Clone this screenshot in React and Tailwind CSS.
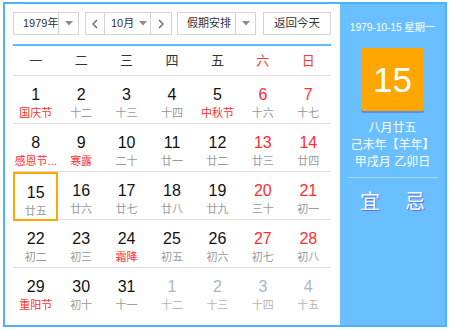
import React from 'react';

const FONT = { fontFamily: '"Liberation Sans", Arial, "Noto Sans CJK SC", sans-serif' };

const weekdays = [
  { label: '一' },
  { label: '二' },
  { label: '三' },
  { label: '四' },
  { label: '五' },
  { label: '六', red: true },
  { label: '日', red: true },
];

// [day, lunar, festival?, otherMonth?]
const weeks = [
  [[1, '国庆节', true], [2, '十二'], [3, '十三'], [4, '十四'], [5, '中秋节', true], [6, '十六'], [7, '十七']],
  [[8, '感恩节...', true], [9, '寒露', true], [10, '二十'], [11, '廿一'], [12, '廿二'], [13, '廿三'], [14, '廿四']],
  [[15, '廿五'], [16, '廿六'], [17, '廿七'], [18, '廿八'], [19, '廿九'], [20, '三十'], [21, '初一']],
  [[22, '初二'], [23, '初三'], [24, '霜降', true], [25, '初五'], [26, '初六'], [27, '初七'], [28, '初八']],
  [[29, '重阳节', true], [30, '初十'], [31, '十一'], [1, '十二', false, true], [2, '十三', false, true], [3, '十四', false, true], [4, '十五', false, true]],
];

const Caret = () => (
  <svg width="8" height="5" viewBox="0 0 8 5">
    <path d="M0 0h8L4 4.5z" fill="#8a8a8a" />
  </svg>
);

const Chevron = ({ dir }) => (
  <svg width="6" height="10" viewBox="0 0 6 10">
    <path d={dir === 'left' ? 'M5 1L1 5l4 4' : 'M1 1l4 4-4 4'} fill="none" stroke="#555" strokeWidth="1.1" />
  </svg>
);

const DayCell = ({ cell, col }) => {
  const [day, lunar, festival, other] = cell;
  const weekend = col >= 5;
  const selected = day === 15 && !other;
  let numColor = 'text-[#111]';
  if (other) numColor = 'text-[#a9b7c6]';
  else if (weekend) numColor = 'text-[#ff2d2d]';
  let lunarColor = 'text-[#999]';
  if (festival) lunarColor = 'text-[#ff2d2d]';
  else if (other) lunarColor = 'text-[#b5b5b5]';

  return (
    <div
      className={`flex h-full flex-col items-center pt-[9px] ${
        selected ? 'border-[2px] border-[#ffa800] pt-[7px]' : ''
      }`}
    >
      <span className={`text-[16px] leading-[19px] ${numColor}`}>{day}</span>
      <span className={`mt-[1px] text-[11px] leading-[16px] whitespace-nowrap ${lunarColor}`}>{lunar}</span>
    </div>
  );
};

const App = () => {
  return (
    <div className="bg-white w-[450px] h-[330px] pt-[2px] pl-[3px]" style={FONT}>
      <div className="flex w-[444px] h-[325px] border-2 border-[#4cb3fa]">
        <div className="w-[335px] pl-[8px] pr-[9px] pt-[8px]">
          <div className="flex items-center h-[23px] text-[11px] text-[#333] whitespace-nowrap">
            <div className="flex h-[23px] w-[66px] border border-[#d3d3d3]">
              <span className="flex-1 flex items-center pl-[9px]">1979年</span>
              <span className="w-[20px] flex items-center justify-center border-l border-[#d3d3d3]">
                <Caret />
              </span>
            </div>
            <div className="flex h-[23px] w-[87px] ml-[6px] border border-[#d3d3d3]">
              <span className="w-[19px] flex items-center justify-center border-r border-[#d3d3d3]">
                <Chevron dir="left" />
              </span>
              <span className="flex-1 flex items-center justify-between pl-[6px] pr-[3px]">
                <span>10月</span>
                <Caret />
              </span>
              <span className="w-[21px] flex items-center justify-center border-l border-[#d3d3d3]">
                <Chevron dir="right" />
              </span>
            </div>
            <div className="flex h-[23px] w-[79px] ml-[5px] border border-[#d3d3d3]">
              <span className="flex-1 flex items-center pl-[9px]">假期安排</span>
              <span className="w-[20px] flex items-center justify-center border-l border-[#d3d3d3]">
                <Caret />
              </span>
            </div>
            <div className="flex h-[23px] w-[68px] ml-[7px] items-center justify-center border border-[#d3d3d3] text-[11.5px]">
              返回今天
            </div>
          </div>

          <div className="mt-[9px] border-t-2 border-[#5fbcff]" />
          <div className="grid grid-cols-7 h-[30px] border-b border-[#dcdcdc] items-center text-[13px]">
            {weekdays.map((w) => (
              <span key={w.label} className={`text-center ${w.red ? 'text-[#ff3b3b]' : 'text-[#333]'}`}>
                {w.label}
              </span>
            ))}
          </div>

          {weeks.map((week, r) => (
            <div
              key={r}
              className={`grid grid-cols-7 h-[48px] ${r < weeks.length - 1 ? 'border-b border-[#dcdcdc]' : ''}`}
            >
              {week.map((cell, c) => (
                <DayCell key={c} cell={cell} col={c} />
              ))}
            </div>
          ))}
        </div>

        <div className="flex-1 bg-[#69bfff] flex flex-col items-center text-white">
          <div className="mt-[15px] text-[10.5px] leading-[16px] tracking-[-0.2px] whitespace-nowrap">1979-10-15 星期一</div>
          <div className="mt-[13px] w-[63px] h-[63px] bg-[#ffa600] rounded-[2px] shadow-[0_2px_0_#5a8cf2] flex items-center justify-center text-[35px] leading-none">
            15
          </div>
          <div className="mt-[9px] text-[12px] leading-[17px] text-center">
            <div>八月廿五</div>
            <div>己未年【羊年】</div>
            <div>甲戌月 乙卯日</div>
          </div>
          <div className="mt-[6px] w-[90px] border-t border-[#a6d9ff]" />
          <div className="mt-[12px] flex gap-[25px] text-[20px] leading-[24px] [text-shadow:1px_1px_0_#5d6ff0]">
            <span>宜</span>
            <span>忌</span>
          </div>
        </div>
      </div>
    </div>
  );
};

export default App;
